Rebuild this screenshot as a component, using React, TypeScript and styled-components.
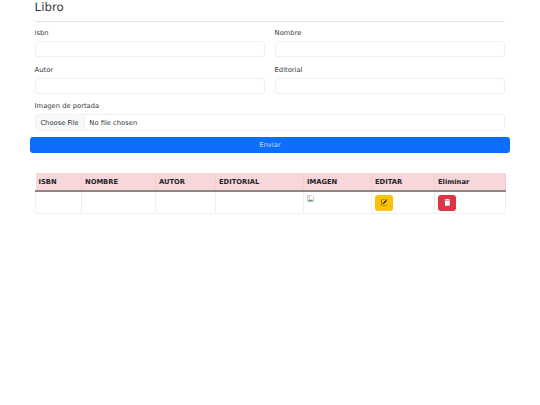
import React from 'react';
import styled, { createGlobalStyle } from 'styled-components';
import { BsPencilSquare } from 'react-icons/bs';
import { FaTrash } from 'react-icons/fa';

const GlobalStyle = createGlobalStyle`
  html, body {
    margin: 0;
    background: #fff;
    font-family: 'DejaVu Sans', sans-serif;
    font-size: 6.75px;
    color: #343a40;
    text-rendering: geometricPrecision;
  }
  * { box-sizing: border-box; }
`;

const Page = styled.div`
  width: 540px;
  height: 405px;
  padding: 0 30px;
  overflow: hidden;
`;

const Inner = styled.div`
  padding: 0 5px;
`;

const Title = styled.h3`
  margin: 0 0 0 -0.4px;
  height: 16px;
  font-size: 11.8px;
  line-height: 14px;
  font-weight: 400;
`;

const Rule = styled.hr`
  margin: 5px 0 0;
  border: 0;
  border-top: 1px solid #e2e3e5;
`;

const FormGrid = styled.div`
  display: grid;
  grid-template-columns: 230px 230px;
  column-gap: 10px;
  row-gap: 6.5px;
  margin-top: 5.3px;
`;

const Field = styled.div<{ $wide?: boolean }>`
  grid-column: ${(p) => (p.$wide ? '1 / 3' : 'auto')};
`;

const Label = styled.label`
  display: block;
  margin-left: -0.4px;
  line-height: 12px;
  margin-bottom: 2px;
`;

const TextBox = styled.div`
  height: 16px;
  background: #fff;
  border: 1px solid #eff0f2;
  border-radius: 3px;
`;

const FileBox = styled.div`
  display: flex;
  align-items: stretch;
  height: 16.5px;
  background: #fff;
  border: 1px solid #eff0f2;
  border-radius: 3px;
  overflow: hidden;
`;

const FileButton = styled.span`
  display: flex;
  align-items: center;
  padding: 0 5px 0 4.4px;
  background: #f8f9fa;
  border-right: 1px solid #eff0f2;
`;

const FileName = styled.span`
  display: flex;
  align-items: center;
  padding-left: 4.6px;
`;

const Submit = styled.button`
  display: block;
  width: 480px;
  height: 16px;
  margin-top: 6.5px;
  padding: 0;
  border: 0;
  border-radius: 3px;
  background: #0d6efd;
  color: #c4dcff;
  font-family: inherit;
  font-size: 6.75px;
`;

const BookTable = styled.table`
  width: 470px;
  margin-top: 20px;
  border-collapse: collapse;
  table-layout: fixed;
  font-size: 6.75px;
`;

const HeadCell = styled.th<{ $width: number }>`
  width: ${(p) => p.$width}px;
  height: 17.5px;
  padding: 0 3px;
  background: #f8d7da;
  border: 0;
  border-right: 1px solid #f1cdd1;
  border-bottom: 2px solid #8f8688;
  text-align: left;
  font-weight: 700;
  color: #212529;
`;

const BodyCell = styled.td`
  height: 22px;
  padding: 3px 3px 2px;
  border: 1px solid #eff0f2;
  vertical-align: top;
`;

const ActionButton = styled.button<{ $bg: string; $fg: string }>`
  display: flex;
  align-items: center;
  justify-content: center;
  width: 18px;
  height: 16px;
  padding: 0;
  border: 0;
  border-radius: 3px;
  background: ${(p) => p.$bg};
  color: ${(p) => p.$fg};
  font-size: 6.75px;
`;

const BrokenImage = () => (
  <svg width="7" height="7" viewBox="0 0 16 16" style={{ display: 'block' }}>
    <path d="M1 1h10l4 4v10H1z" fill="#fff" stroke="#b0b4ba" strokeWidth="1.5" />
    <path d="M2 14l4-5 3 3 2-2 3 4z" fill="#5fa35a" />
    <path d="M3 3h4v4H3z" fill="#a9c5ee" />
  </svg>
);

const columns: [string, number][] = [
  ['ISBN', 46],
  ['NOMBRE', 74],
  ['AUTOR', 60],
  ['EDITORIAL', 88],
  ['IMAGEN', 68],
  ['EDITAR', 63],
  ['Eliminar', 71],
];

export default function App() {
  return (
    <Page>
      <GlobalStyle />
      <Inner>
        <Title>Libro</Title>
        <Rule />
        <FormGrid>
          <Field>
            <Label>isbn</Label>
            <TextBox />
          </Field>
          <Field>
            <Label>Nombre</Label>
            <TextBox />
          </Field>
          <Field>
            <Label>Autor</Label>
            <TextBox />
          </Field>
          <Field>
            <Label>Editorial</Label>
            <TextBox />
          </Field>
          <Field $wide>
            <Label>Imagen de portada</Label>
            <FileBox>
              <FileButton>Choose File</FileButton>
              <FileName>No file chosen</FileName>
            </FileBox>
          </Field>
        </FormGrid>
      </Inner>
      <Submit>Enviar</Submit>
      <Inner>
        <BookTable>
          <thead>
            <tr>
              {columns.map(([name, width]) => (
                <HeadCell key={name} $width={width}>{name}</HeadCell>
              ))}
            </tr>
          </thead>
          <tbody>
            <tr>
              <BodyCell />
              <BodyCell />
              <BodyCell />
              <BodyCell />
              <BodyCell><BrokenImage /></BodyCell>
              <BodyCell>
                <ActionButton $bg="#ffc107" $fg="#000"><BsPencilSquare /></ActionButton>
              </BodyCell>
              <BodyCell>
                <ActionButton $bg="#dc3545" $fg="#fff"><FaTrash /></ActionButton>
              </BodyCell>
            </tr>
          </tbody>
        </BookTable>
      </Inner>
    </Page>
  );
}
